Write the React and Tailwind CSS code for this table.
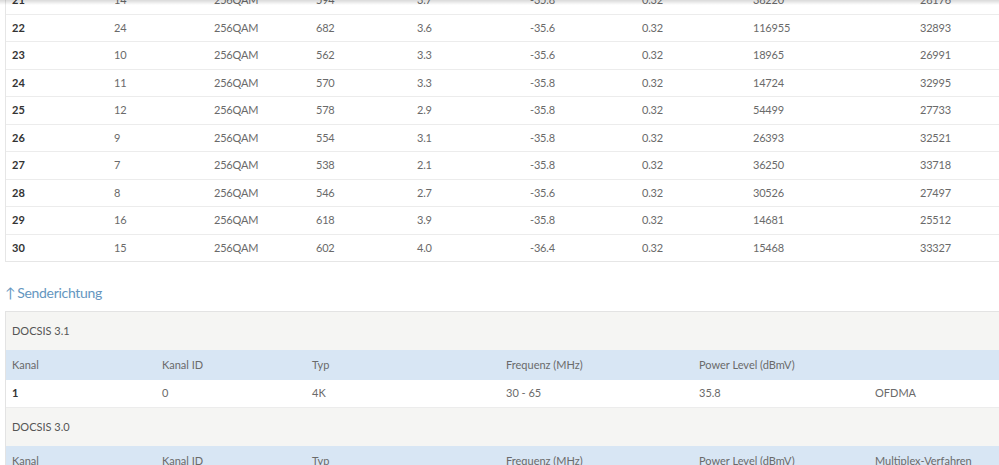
import React from 'react';

const DOWN = [
  ['21', '14', '256QAM', '594', '3.7', '-35.8', '0.32', '38220', '28176'],
  ['22', '24', '256QAM', '682', '3.6', '-35.6', '0.32', '116955', '32893'],
  ['23', '10', '256QAM', '562', '3.3', '-35.6', '0.32', '18965', '26991'],
  ['24', '11', '256QAM', '570', '3.3', '-35.8', '0.32', '14724', '32995'],
  ['25', '12', '256QAM', '578', '2.9', '-35.8', '0.32', '54499', '27733'],
  ['26', '9', '256QAM', '554', '3.1', '-35.8', '0.32', '26393', '32521'],
  ['27', '7', '256QAM', '538', '2.1', '-35.8', '0.32', '36250', '33718'],
  ['28', '8', '256QAM', '546', '2.7', '-35.6', '0.32', '30526', '27497'],
  ['29', '16', '256QAM', '618', '3.9', '-35.8', '0.32', '14681', '25512'],
  ['30', '15', '256QAM', '602', '4.0', '-36.4', '0.32', '15468', '33327'],
];

const UP_HEAD = ['Kanal', 'Kanal ID', 'Typ', 'Frequenz (MHz)', 'Power Level (dBmV)'];

const downCols = 'grid grid-cols-[102px_100px_102px_101px_113px_112px_111px_167px_1fr]';
const upCols = 'grid grid-cols-[150px_150px_194px_193px_176px_1fr]';

export default function App() {
  return (
    <div className="relative w-[999px] h-[465px] overflow-hidden bg-white text-[11px] text-[#6a6a6a] font-['Lato','Noto_Sans',sans-serif]">
      {/* shadow from sticky header above */}
      <div className="absolute top-0 left-0 right-0 h-[5px] bg-gradient-to-b from-black/15 to-transparent z-10" />

      <div className="pl-[5px]">
        {/* Empfangsrichtung table (tail) */}
        <div className="-mt-[14px] border-l border-b border-[#e6e6e6]">
          {DOWN.map((row, i) => (
            <div
              key={row[0]}
              className={`${downCols} h-[27.5px] items-center pl-[6px] ${i > 0 ? 'border-t border-[#ececec]' : ''}`}
            >
              {row.map((c, j) => (
                <span key={j} className={j === 0 ? 'font-bold text-[#333]' : 'tracking-[-0.2px]'}>{c}</span>
              ))}
            </div>
          ))}
        </div>

        {/* Senderichtung */}
        <h3 className="mt-[20px] h-[20px] flex items-center text-[14px] tracking-[-0.3px] text-[#6596c0]">
          <span className="mr-[2px]">↑</span>Senderichtung
        </h3>

        <div className="mt-[9px] border-l border-t border-[#e3e3e3]">
          <div className="h-[38px] flex items-center pl-[6px] bg-[#f5f5f3] text-[#555]">DOCSIS 3.1</div>
          <div className={`${upCols} h-[30px] items-center pl-[6px] bg-[#d8e6f4]`}>
            {UP_HEAD.map(h => <span key={h}>{h}</span>)}
            <span></span>
          </div>
          <div className={`${upCols} h-[27px] items-center pl-[6px] bg-white`}>
            <span className="font-bold text-[#333]">1</span>
            <span>0</span>
            <span>4K</span>
            <span>30 - 65</span>
            <span>35.8</span>
            <span>OFDMA</span>
          </div>
          <div className="h-[39px] flex items-center pl-[6px] bg-[#f5f5f3] text-[#555] border-t border-[#ececec]">DOCSIS 3.0</div>
          <div className={`${upCols} h-[30px] items-center pl-[6px] bg-[#d8e6f4]`}>
            {UP_HEAD.map(h => <span key={h}>{h}</span>)}
            <span>Multiplex-Verfahren</span>
          </div>
        </div>
      </div>
    </div>
  );
}
